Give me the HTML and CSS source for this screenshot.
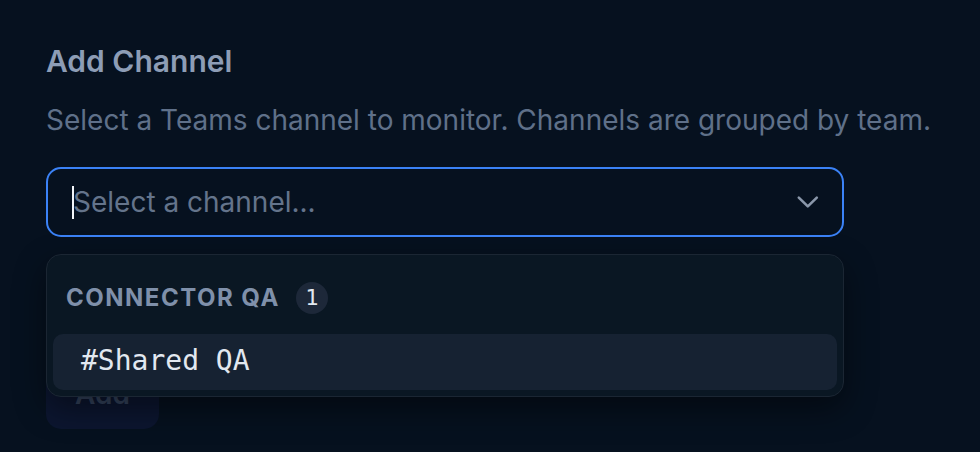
FILE: index.html
```html
<!DOCTYPE html>
<html lang="en">
<head>
<meta charset="utf-8">
<title>Add Channel</title>
<link rel="stylesheet" href="styles.css">
</head>
<body>
<main class="panel">
  <h2 class="title">Add Channel</h2>
  <p class="desc">Select a Teams channel to monitor. Channels are grouped by team.</p>
  <div class="field">
    <div class="select">
      <span class="caret"></span><span class="placeholder">Select a channel...</span>
      <svg class="chevron" width="24" height="24" viewBox="0 0 24 24" aria-hidden="true"><path d="M2.8 7.6 L11.8 16.4 L20.8 7.6" fill="none" stroke="currentColor" stroke-width="2.6" stroke-linecap="round" stroke-linejoin="round"/></svg>
    </div>
    <div class="menu">
      <div class="group-head"><span class="group-name">CONNECTOR QA</span><span class="badge">1</span></div>
      <div class="item">#Shared QA</div>
    </div>
  </div>
  <button class="add" type="button">Add</button>
</main>
</body>
</html>
```
FILE: styles.css
```css
html, body {
  margin: 0;
  height: 100%;
  background: #06111f;
}
body {
  font-family: Inter, "Noto Sans", "Liberation Sans", sans-serif;
}
.panel {
  padding: 40px 46px 0;
}
.title {
  margin: 0;
  font-size: 30px;
  line-height: 42px;
  font-weight: 600;
  color: #8d9db6;
}
.desc {
  margin: 18px 0 0;
  font-size: 28px;
  line-height: 40px;
  color: #5f7089;
  white-space: nowrap;
}
.field {
  position: relative;
  width: 798px;
  margin-top: 27px;
}
.select {
  box-sizing: border-box;
  height: 70px;
  border: 2px solid #3b82f6;
  border-radius: 15px;
  padding: 0 22px 0 24px;
  display: flex;
  align-items: center;
  background: #06111f;
}
.caret {
  display: inline-block;
  width: 2px;
  height: 33px;
  background: #f1f5f9;
  margin-right: -1px;
}
.placeholder {
  flex: 1;
  font-size: 28px;
  line-height: 40px;
  color: #64748b;
}
.chevron {
  color: #8a97aa;
  display: block;
}
.menu {
  position: absolute;
  left: 0;
  right: 0;
  top: calc(100% + 17px);
  box-sizing: border-box;
  background: #0a1723;
  border: 1px solid #1b2633;
  border-radius: 15px;
  padding: 6px;
  box-shadow: 0 12px 32px rgba(0, 0, 0, 0.45);
  z-index: 2;
}
.group-head {
  display: flex;
  align-items: center;
  padding: 21px 13px 20px;
}
.group-name {
  font-size: 24px;
  line-height: 32px;
  font-weight: 700;
  letter-spacing: 1.5px;
  color: #7f90aa;
}
.badge {
  margin-left: 16px;
  width: 32px;
  height: 32px;
  border-radius: 50%;
  background: #1d2839;
  color: #e2e8f0;
  font-family: "DejaVu Sans Mono", monospace;
  font-size: 22px;
  line-height: 32px;
  text-align: center;
}
.item {
  height: 56px;
  border-radius: 10px;
  background: #162232;
  padding: 0 28px;
  font-family: "DejaVu Sans Mono", "Liberation Mono", monospace;
  font-size: 28px;
  line-height: 54px;
  color: #e2e8f0;
}
.add {
  display: block;
  margin-top: 122px;
  height: 70px;
  width: 113px;
  border: 0;
  border-radius: 15px;
  background: #0c1630;
  color: #34435d;
  font-family: Inter, "Noto Sans", sans-serif;
  font-size: 28px;
  font-weight: 600;
  padding: 0;
}
```
